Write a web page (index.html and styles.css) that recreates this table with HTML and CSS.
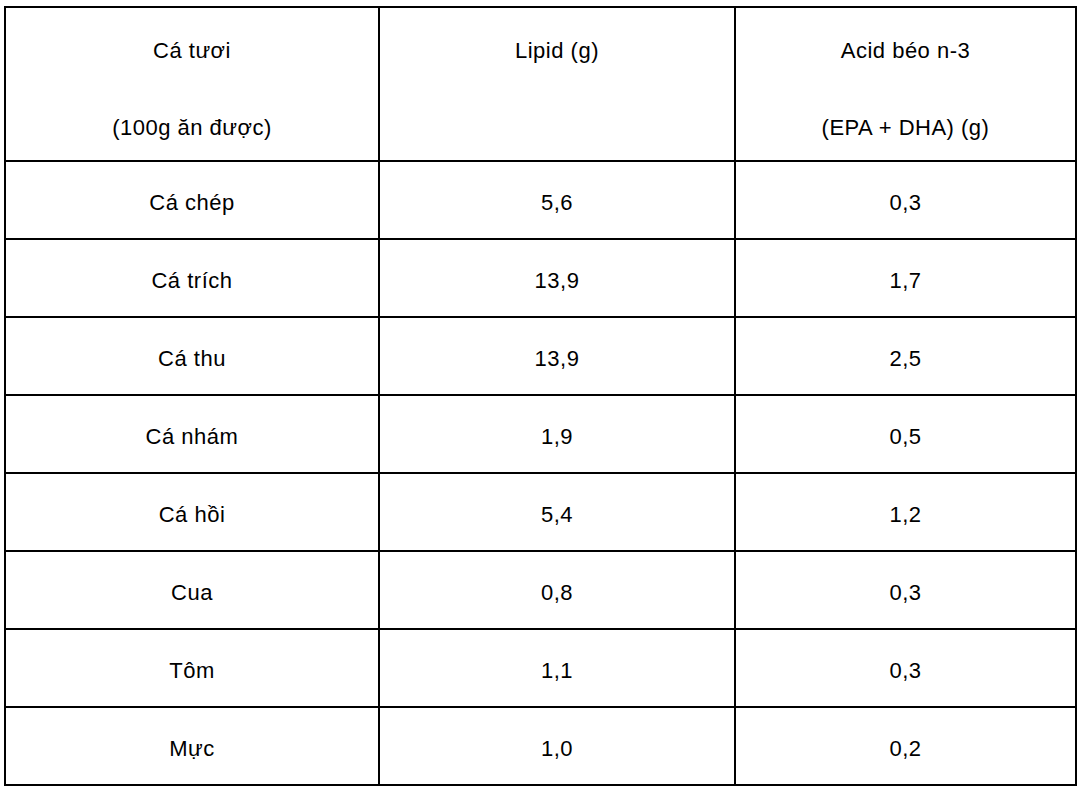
FILE: index.html
```html
<!DOCTYPE html>
<html lang="vi">
<head>
<meta charset="utf-8">
<title>Cá tươi</title>
<link rel="stylesheet" href="styles.css">
</head>
<body>
<table class="fish">
  <colgroup>
    <col class="c1">
    <col class="c2">
    <col class="c3">
  </colgroup>
  <thead>
    <tr class="head">
      <th><p>Cá tươi</p><p>(100g ăn được)</p></th>
      <th><p>Lipid (g)</p></th>
      <th><p>Acid béo n-3</p><p>(EPA + DHA) (g)</p></th>
    </tr>
  </thead>
  <tbody>
    <tr><td>Cá chép</td><td>5,6</td><td>0,3</td></tr>
    <tr><td>Cá trích</td><td>13,9</td><td>1,7</td></tr>
    <tr><td>Cá thu</td><td>13,9</td><td>2,5</td></tr>
    <tr><td>Cá nhám</td><td>1,9</td><td>0,5</td></tr>
    <tr><td>Cá hồi</td><td>5,4</td><td>1,2</td></tr>
    <tr><td>Cua</td><td>0,8</td><td>0,3</td></tr>
    <tr><td>Tôm</td><td>1,1</td><td>0,3</td></tr>
    <tr><td>Mực</td><td>1,0</td><td>0,2</td></tr>
  </tbody>
</table>
</body>
</html>
```

FILE: styles.css
```css
html, body {
  margin: 0;
  padding: 0;
  background: #ffffff;
}

body {
  font-family: "Liberation Sans", Arial, sans-serif;
  color: #000000;
}

.fish {
  border-collapse: collapse;
  table-layout: fixed;
  width: 1071px;
  margin: 6px 0 0 4px;
  font-size: 22px;
  letter-spacing: 0.5px;
  line-height: 24px;
}

.c1 { width: 374px; }
.c2 { width: 356px; }
.c3 { width: 341px; }

.fish th,
.fish td {
  border: 2px solid #000000;
  text-align: center;
  font-weight: normal;
  padding: 0;
}

.head th {
  height: 154px;
  vertical-align: top;
  padding-top: 31px;
  box-sizing: border-box;
}

.head p {
  margin: 0;
}

.head p + p {
  margin-top: 53px;
}

.fish td {
  height: 78px;
  vertical-align: middle;
  padding-top: 6px;
  box-sizing: border-box;
}
```
